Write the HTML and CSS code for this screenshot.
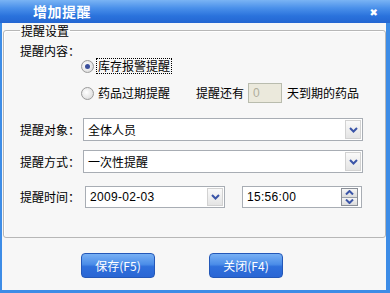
FILE: index.html
```html
<!DOCTYPE html>
<html lang="zh-CN">
<head>
  <meta charset="UTF-8" />
  <title>增加提醒</title>
<link rel="stylesheet" href="styles.css">
</head>
<body>
  <div class="window">
    <div class="titlebar">
      <span class="title">增加提醒</span>
      <span class="close">&#x2716;</span>
    </div>
    <div class="body">
      <fieldset class="group">
        <legend>提醒设置</legend>

        <div class="label-row">提醒内容：</div>
        <div class="radio-row first">
          <span class="radio checked"></span>
          <span class="radio-text focused">库存报警提醒</span>
        </div>
        <div class="radio-row second">
          <span class="radio"></span>
          <span class="radio-text">药品过期提醒</span>
          <span class="days-text">提醒还有</span>
          <span class="days-box">0</span>
          <span class="days-text">天到期的药品</span>
        </div>

        <div class="field-row target">
          <span class="field-label">提醒对象：</span>
          <div class="combo wide">
            <span class="combo-text">全体人员</span>
            <span class="drop-btn"><svg width="9" height="6" viewBox="0 0 9 6"><path d="M1 1 L4.5 4.5 L8 1" fill="none" stroke="#3b55a8" stroke-width="2"/></svg></span>
          </div>
        </div>

        <div class="field-row mode">
          <span class="field-label">提醒方式：</span>
          <div class="combo wide">
            <span class="combo-text">一次性提醒</span>
            <span class="drop-btn"><svg width="9" height="6" viewBox="0 0 9 6"><path d="M1 1 L4.5 4.5 L8 1" fill="none" stroke="#3b55a8" stroke-width="2"/></svg></span>
          </div>
        </div>

        <div class="field-row time">
          <span class="field-label">提醒时间：</span>
          <div class="combo date">
            <span class="combo-text mono">2009-02-03</span>
            <span class="drop-btn"><svg width="9" height="6" viewBox="0 0 9 6"><path d="M1 1 L4.5 4.5 L8 1" fill="none" stroke="#3b55a8" stroke-width="2"/></svg></span>
          </div>
          <div class="combo clock">
            <span class="combo-text mono">15:56:00</span>
            <span class="spin">
              <span class="spin-btn"><svg width="9" height="5" viewBox="0 0 9 5"><path d="M1 4.5 L4.5 1 L8 4.5" fill="none" stroke="#3b55a8" stroke-width="2"/></svg></span>
              <span class="spin-btn"><svg width="9" height="5" viewBox="0 0 9 5"><path d="M1 0.5 L4.5 4 L8 0.5" fill="none" stroke="#3b55a8" stroke-width="2"/></svg></span>
            </span>
          </div>
        </div>
      </fieldset>

      <div class="actions">
        <button type="button" class="btn">保存(F5)</button>
        <button type="button" class="btn">关闭(F4)</button>
      </div>
    </div>
  </div>
</body>
</html>
```

FILE: styles.css
```css
body {
  margin: 0;
  padding: 0;
  font-family: "Noto Sans CJK SC", "DejaVu Sans", sans-serif;
  font-size: 12px;
  color: #000;
  background: #ffffff;
}

.window {
  width: 390px;
  height: 293px;
  display: flex;
  flex-direction: column;
}

.titlebar {
  height: 23px;
  display: flex;
  align-items: center;
  justify-content: space-between;
  padding: 0 12px 0 33px;
  background: linear-gradient(to bottom, #7ab4f4 0%, #4a90ea 35%, #2a72dc 70%, #2466d2 100%);
}

.title {
  color: #fff;
  font-weight: bold;
  font-size: 14px;
  letter-spacing: 0.5px;
  line-height: 23px;
}

.close {
  color: #fff;
  font-size: 10px;
  font-weight: bold;
  line-height: 23px;
}

.body {
  flex: 1;
  display: flex;
  flex-direction: column;
  background: #f7f7f7;
  border: 3px solid #3d8ce6;
  border-top: none;
  border-left-width: 2px;
  border-right-width: 4px;
  padding: 0 0 0 1px;
}

.group {
  margin: 1px 0 0 0;
  padding: 0 0 0 16px;
  height: 214px;
  min-width: 0;
  box-sizing: border-box;
  border: 1px solid #b7b7b7;
  border-radius: 3px;
  box-shadow: inset 1px 1px 0 #ffffff;
}

.group legend {
  padding: 0 1px;
  margin-left: 0;
  font-size: 12px;
  line-height: 13px;
}

.label-row {
  margin-top: 7px;
  line-height: 14px;
}

.radio-row {
  display: flex;
  align-items: center;
  padding-left: 61px;
  white-space: nowrap;
}

.radio-row.first {
  height: 16px;
}

.radio-row.second {
  height: 22px;
  margin-top: 8px;
}

.radio {
  flex-shrink: 0;
  width: 11px;
  height: 11px;
  border: 1px solid #9a9a9a;
  border-radius: 50%;
  background: radial-gradient(circle at 40% 40%, #ffffff 0%, #e6e6e6 60%, #cfcfcf 100%);
  display: flex;
  align-items: center;
  justify-content: center;
  margin-right: 3px;
}

.radio.checked::after {
  content: "";
  width: 5px;
  height: 5px;
  border-radius: 50%;
  background: #3a4f9c;
}

.radio-text {
  line-height: 14px;
  padding: 0 1px;
}

.radio-text.focused {
  outline: 1px dotted #000;
}

.days-text {
  line-height: 14px;
}

.radio-row.second .radio-text {
  margin-right: 25px;
}

.days-box {
  width: 28px;
  height: 18px;
  margin: 0 5px 0 4px;
  border: 1px solid #b9bcae;
  background: #ebe9dc;
  color: #b0ae9c;
  font-family: "Liberation Sans", sans-serif;
  font-size: 12px;
  line-height: 18px;
  padding-left: 4px;
  box-sizing: content-box;
}

.field-row {
  display: flex;
  align-items: center;
}

.field-row.target {
  margin-top: 14px;
}

.field-row.mode {
  margin-top: 9px;
}

.field-row.time {
  margin-top: 13px;
}

.field-label {
  flex-shrink: 0;
  width: 63px;
  white-space: nowrap;
  line-height: 14px;
}

.combo {
  flex-shrink: 0;
  height: 23px;
  box-sizing: border-box;
  border: 1px solid #a8adb4;
  background: #fff;
  display: flex;
  align-items: center;
  justify-content: space-between;
}

.combo.wide {
  width: 280px;
}

.combo.date {
  width: 140px;
  height: 22px;
  margin-left: 2px;
}

.combo.clock {
  width: 120px;
  height: 22px;
  margin-left: 17px;
}

.combo-text {
  padding-left: 4px;
}

.combo-text.mono {
  font-family: "Liberation Sans", sans-serif;
  font-size: 12px;
  letter-spacing: 0.3px;
}

.drop-btn {
  width: 16px;
  height: 19px;
  margin-right: 1px;
  border: 1px solid #d2d2d2;
  box-sizing: border-box;
  background: linear-gradient(to bottom, #fafafa, #e4e4e4);
  display: flex;
  align-items: center;
  justify-content: center;
}

.combo.date .drop-btn,
.combo.clock .drop-btn {
  height: 18px;
}

.spin {
  display: flex;
  flex-direction: column;
  width: 15px;
  height: 16px;
  margin-right: 3px;
  border: 1px solid #8a8f98;
}

.spin-btn {
  flex: 1;
  display: flex;
  align-items: center;
  justify-content: center;
  background: linear-gradient(to bottom, #f6f6f6, #dcdcdc);
}

.spin-btn + .spin-btn {
  border-top: 1px solid #9aa0aa;
}

.actions {
  display: flex;
  padding: 15px 0 0 78px;
  gap: 54px;
}

.btn {
  width: 74px;
  height: 25px;
  padding: 0;
  border: 1px solid #2458b8;
  border-radius: 4px;
  background: linear-gradient(to bottom, #78b0f4 0%, #4b8de8 45%, #2f70dc 55%, #2a66d4 100%);
  color: #fff;
  font-family: "Noto Sans CJK SC", sans-serif;
  font-size: 12px;
  cursor: pointer;
}
```
